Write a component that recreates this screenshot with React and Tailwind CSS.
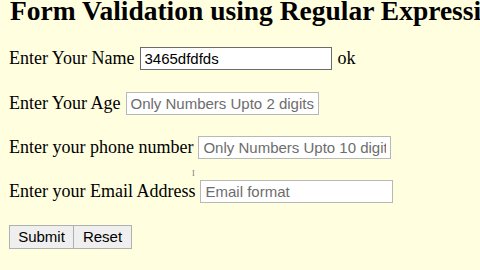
export default function App() {
  return (
    <div className="w-[480px] h-[270px] overflow-hidden bg-[#ffffe0] text-black font-['Liberation_Serif',serif]">
      <div className="pl-[9px]">
        <div className="flex h-[24px]">
          <h1 className="text-[27.5px] font-bold leading-[27.5px] whitespace-nowrap -mt-[3px] ml-[1px]">
            Form Validation using Regular Expression
          </h1>
        </div>

        <div className="flex items-center mt-[23px] h-[23px] text-[18px]">
          <span>Enter Your Name</span>
          <input
            defaultValue="3465dfdfds"
            className="ml-[6px] w-[192px] h-[23px] border border-[#6b6b6b] bg-white px-[3px] text-[15px] font-['Liberation_Sans',sans-serif] outline-none"
          />
          <span className="ml-[5px]">ok</span>
        </div>

        <div className="flex items-center mt-[22px] h-[23px] text-[18px]">
          <span>Enter Your Age</span>
          <input
            placeholder="Only Numbers Upto 2 digits"
            className="ml-[5px] w-[193px] h-[23px] border border-[#b8b8b8] bg-white px-[4px] text-[15px] font-['Liberation_Sans',sans-serif] placeholder:text-[#6d6d6d] outline-none"
          />
        </div>

        <div className="flex items-center mt-[21px] h-[23px] text-[18px]">
          <span>Enter your phone number</span>
          <input
            placeholder="Only Numbers Upto 10 digits"
            className="ml-[5px] w-[193px] h-[23px] border border-[#b8b8b8] bg-white px-[4px] text-[15px] font-['Liberation_Sans',sans-serif] placeholder:text-[#6d6d6d] outline-none"
          />
        </div>

        <div className="relative flex items-center mt-[21px] h-[23px] text-[18px]">
          <span className="absolute left-[183px] -top-[10px] text-[8px] leading-none text-[#777]">I</span>
          <span>Enter your Email Address</span>
          <input
            placeholder="Email format"
            className="ml-[5px] w-[193px] h-[23px] border border-[#b8b8b8] bg-white px-[4px] text-[15px] font-['Liberation_Sans',sans-serif] placeholder:text-[#6d6d6d] outline-none"
          />
        </div>

        <div className="flex mt-[22px] font-['Liberation_Sans',sans-serif] text-[15px]">
          <button className="w-[65px] h-[24px] bg-[#efefef] border border-[#b0b0b0]">Submit</button>
          <button className="w-[58px] h-[24px] bg-[#efefef] border border-[#b0b0b0] border-l-0">Reset</button>
        </div>
      </div>
    </div>
  );
}
